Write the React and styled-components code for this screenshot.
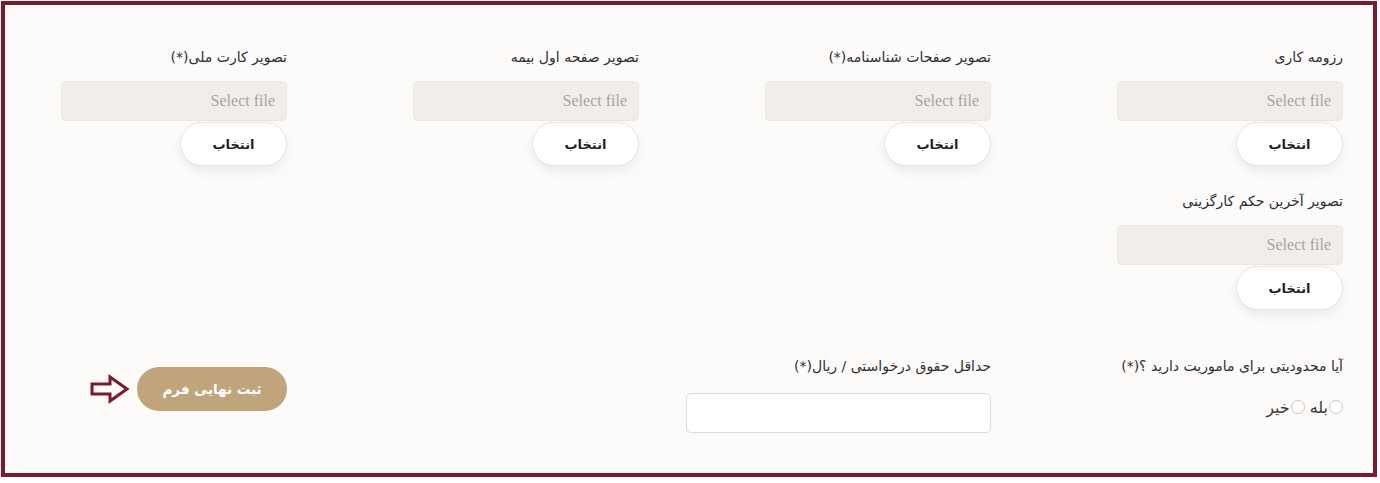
import React from "react";
import styled, { createGlobalStyle } from "styled-components";

const GlobalStyle = createGlobalStyle`
  body {
    margin: 0;
    background: #ffffff;
    font-family: "DejaVu Sans", "Noto Sans", sans-serif;
  }
`;

const Frame = styled.form`
  box-sizing: border-box;
  width: 1376px;
  height: 476px;
  margin: 1px;
  border: 4px solid #7a1a2c;
  background: #fdfbfa;
  direction: rtl;
  padding: 42px 30px 0 55px;
`;

const Grid = styled.div`
  display: grid;
  grid-template-columns: repeat(4, 226px);
  column-gap: 126px;
  margin-top: ${(p) => p.$top ?? 0}px;
`;

const Column = styled.div`
  display: flex;
  flex-direction: column;
  align-items: flex-start;
  padding-top: ${(p) => p.$pad ?? 0}px;
`;

const Field = styled.div`
  display: flex;
  flex-direction: column;
  align-items: flex-start;
  width: 100%;
  margin-top: ${(p) => p.$top ?? 0}px;
`;

const Label = styled.label`
  display: block;
  height: 20px;
  line-height: 20px;
  font-size: 14px;
  color: #2e2e33;
  white-space: nowrap;
  margin-bottom: ${(p) => p.$gap ?? 14}px;
`;

const FileBox = styled.div`
  box-sizing: border-box;
  width: 100%;
  height: 40px;
  background: #f1eeea;
  border: 1px solid #ebe7e2;
  border-radius: 5px;
  padding-right: 11px;
  display: flex;
  align-items: center;
  direction: rtl;
  font-family: "Liberation Serif", serif;
  font-size: 16px;
  color: #a9a39c;
`;

const PickButton = styled.button`
  margin-top: 1px;
  width: 107px;
  height: 44px;
  border-radius: 22px;
  border: 1px solid #e9e6e2;
  background: #ffffff;
  box-shadow: 0 5px 12px rgba(0, 0, 0, 0.07);
  font-family: "DejaVu Sans", sans-serif;
  font-weight: bold;
  font-size: 13px;
  color: #1f1f1f;
  cursor: pointer;
`;

const TextInput = styled.input`
  box-sizing: border-box;
  width: 305px;
  height: 40px;
  background: #ffffff;
  border: 1px solid #dedbd8;
  border-radius: 5px;
  flex-shrink: 0;
`;

const RadioRow = styled.div`
  display: flex;
  align-items: center;
  gap: 5px;
  height: 20px;
  margin-top: 21px;
  font-size: 16px;
  color: #3a3a3a;
`;

const RadioOption = styled.label`
  display: flex;
  align-items: center;
  gap: 1px;
`;

const Radio = styled.input`
  appearance: none;
  width: 14px;
  height: 14px;
  margin: 0;
  border: 1px solid #c9c6c3;
  border-radius: 50%;
  background: #fff;
`;

const SubmitWrap = styled.div`
  display: flex;
  align-items: center;
  gap: 7px;
`;

const SubmitButton = styled.button`
  width: 150px;
  height: 44px;
  border: none;
  border-radius: 22px;
  background: #bfa47c;
  color: #ffffff;
  font-family: "DejaVu Sans", sans-serif;
  font-weight: bold;
  font-size: 13.5px;
  cursor: pointer;
`;

const FileField = ({ label, top }) => (
  <Field $top={top}>
    <Label>{label}</Label>
    <FileBox>Select file</FileBox>
    <PickButton type="button">انتخاب</PickButton>
  </Field>
);

const Arrow = () => (
  <svg width="40" height="30" viewBox="0 0 40 30">
    <path
      d="M2 10 H20 V3 L37 15 L20 27 V20 H2 Z"
      fill="none"
      stroke="#7a1a2c"
      strokeWidth="3"
      strokeLinejoin="miter"
    />
  </svg>
);

export default function App() {
  return (
    <>
      <GlobalStyle />
      <Frame>
        <Grid>
          <Column>
            <FileField label="رزومه کاری" />
            <FileField label="تصویر آخرین حکم کارگزینی" top={25} />
          </Column>
          <Column>
            <FileField label="تصویر صفحات شناسنامه(*)" />
          </Column>
          <Column>
            <FileField label="تصویر صفحه اول بیمه" />
          </Column>
          <Column>
            <FileField label="تصویر کارت ملی(*)" />
          </Column>
        </Grid>
        <Grid $top={46}>
          <Column>
            <Label $gap={0}>آیا محدودیتی برای ماموریت دارید ؟(*)</Label>
            <RadioRow>
              <RadioOption>
                <Radio type="radio" name="limit" />
                بله
              </RadioOption>
              <RadioOption>
                <Radio type="radio" name="limit" />
                خیر
              </RadioOption>
            </RadioRow>
          </Column>
          <Column>
            <Label $gap={17}>حداقل حقوق درخواستی / ریال(*)</Label>
            <TextInput type="text" />
          </Column>
          <Column />
          <Column $pad={11}>
            <SubmitWrap>
              <SubmitButton type="button">ثبت نهایی فرم</SubmitButton>
              <Arrow />
            </SubmitWrap>
          </Column>
        </Grid>
      </Frame>
    </>
  );
}
